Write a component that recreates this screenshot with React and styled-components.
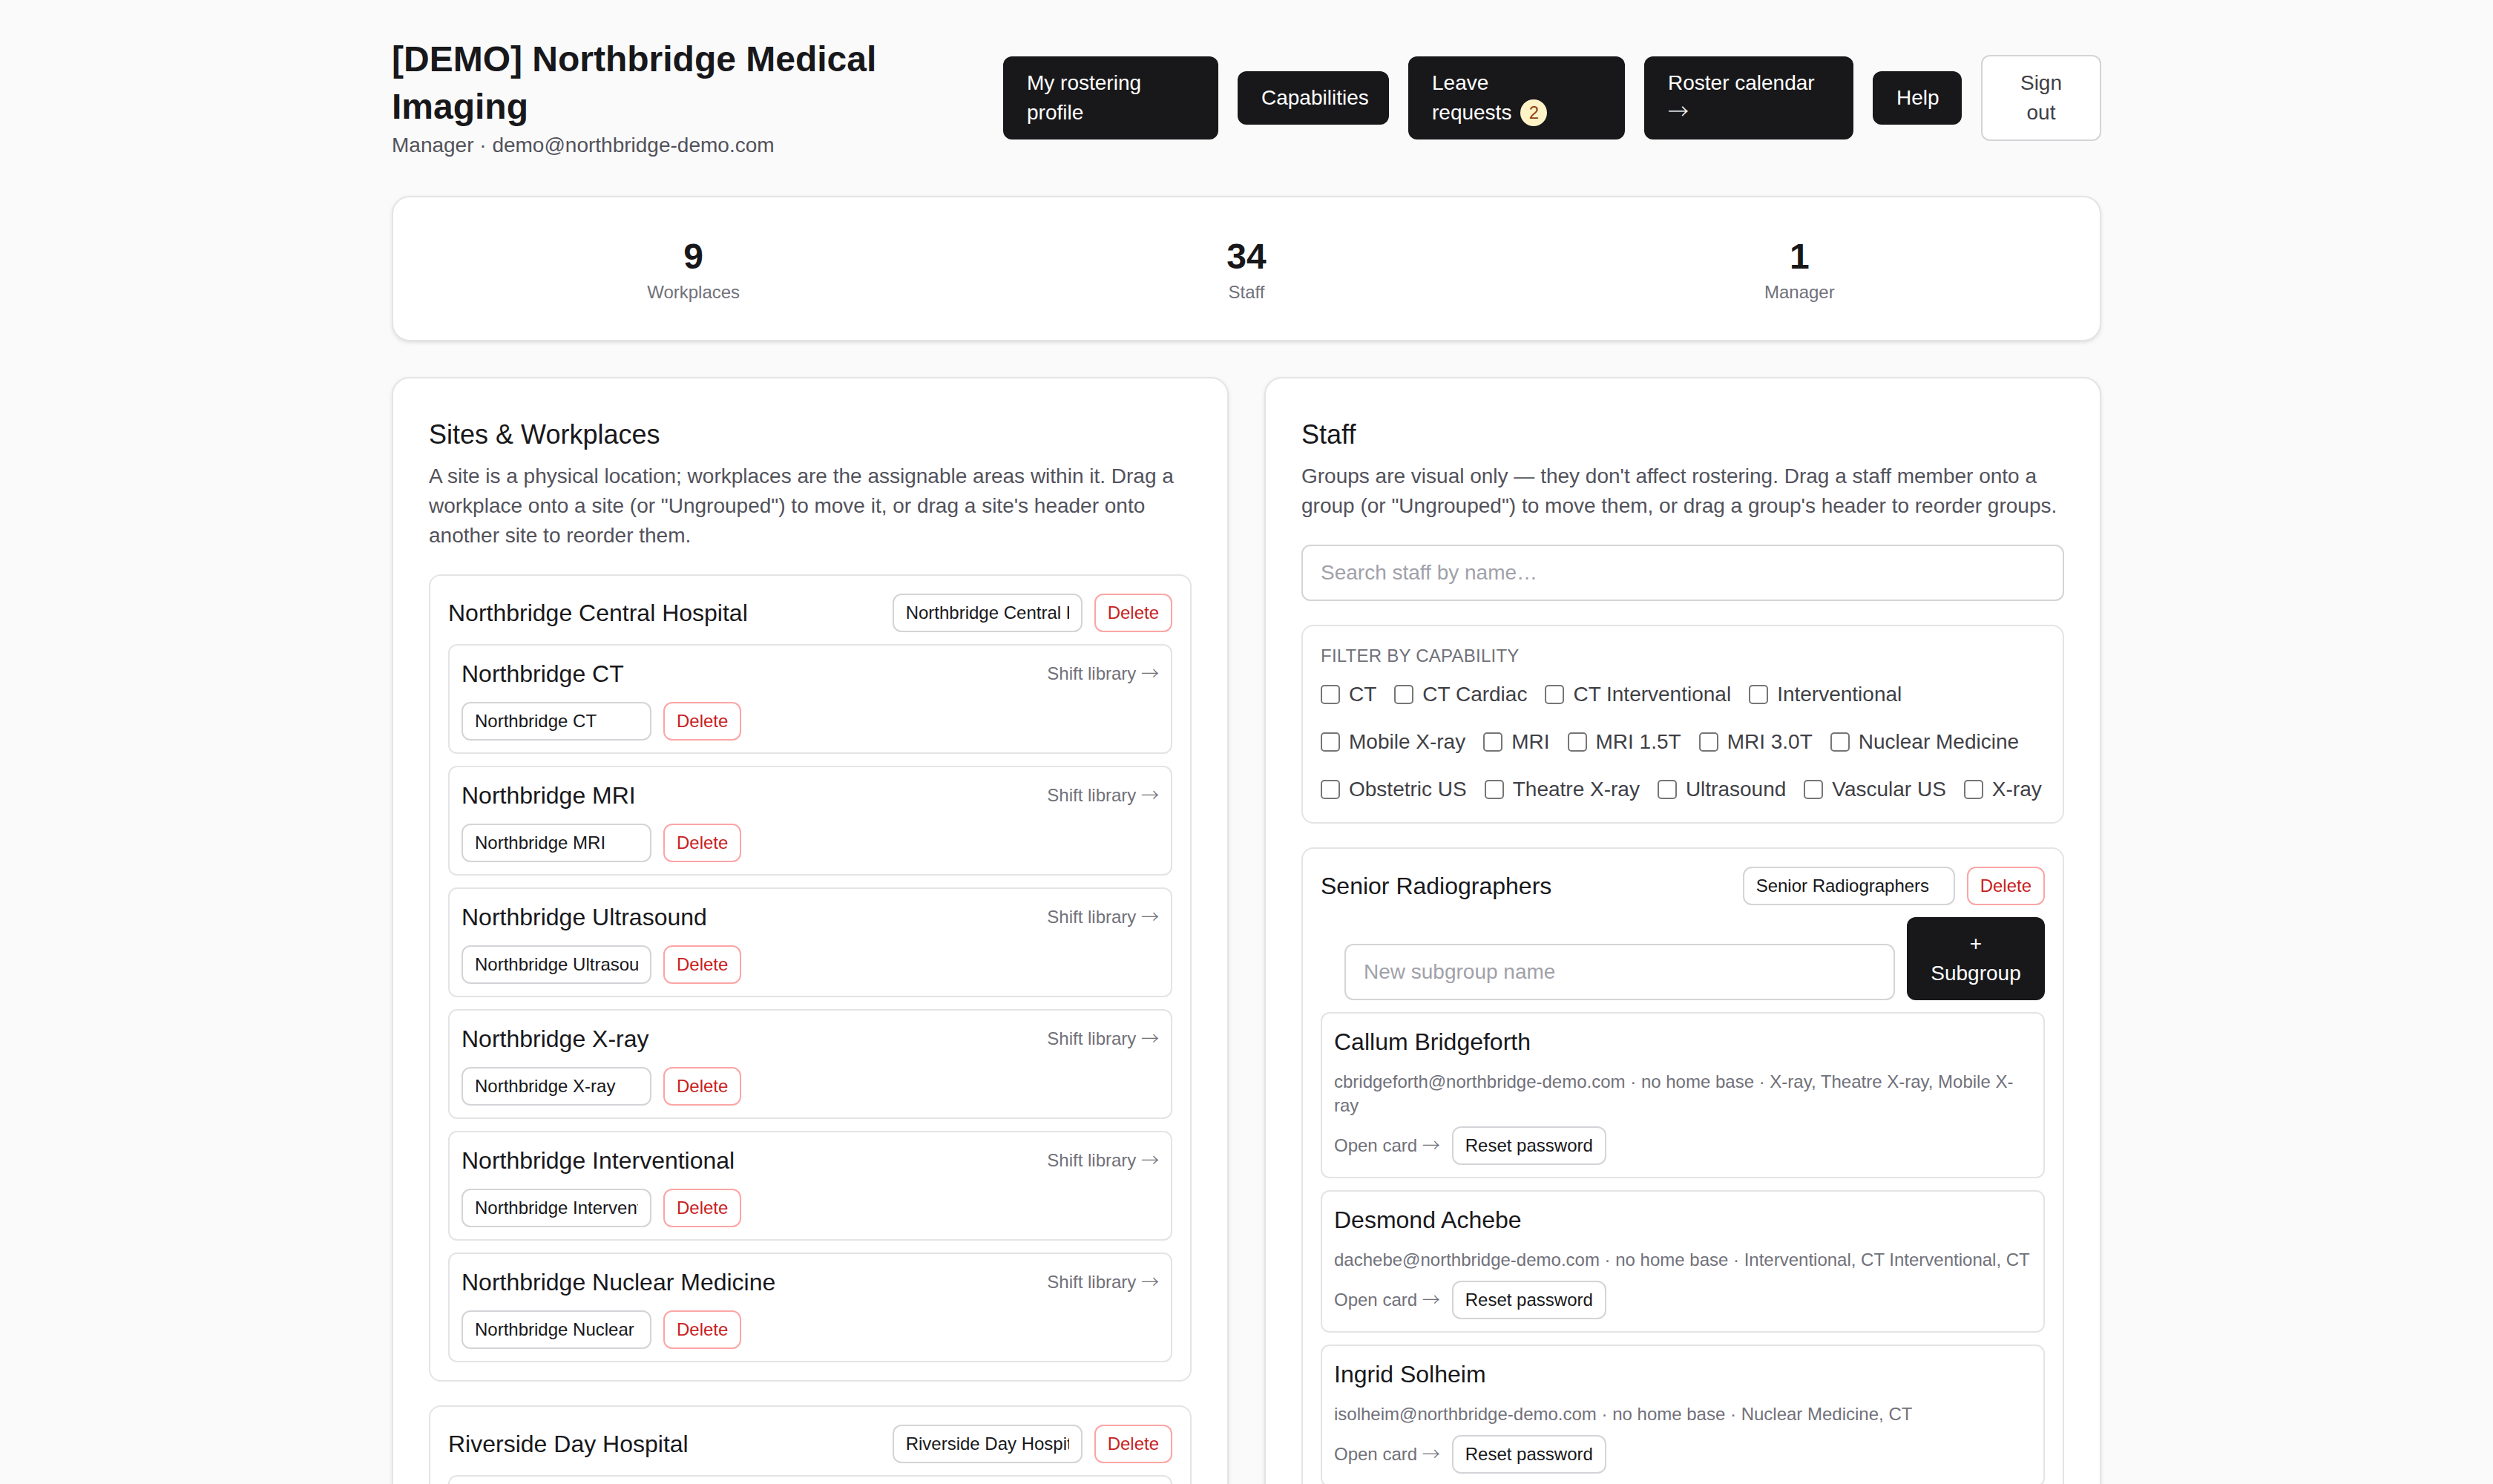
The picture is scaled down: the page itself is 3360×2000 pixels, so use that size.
import styled, { createGlobalStyle } from "styled-components";

const GlobalStyle = createGlobalStyle`
  * { box-sizing: border-box; }
  body {
    margin: 0;
    background: #fafafa;
    color: #18181b;
    font-family: "Liberation Sans", Arial, sans-serif;
  }
  button, input { font-family: inherit; }
`;

const sites = [
  {
    name: "Northbridge Central Hospital",
    workplaces: [
      "Northbridge CT",
      "Northbridge MRI",
      "Northbridge Ultrasound",
      "Northbridge X-ray",
      "Northbridge Interventional",
      "Northbridge Nuclear Medicine",
    ],
  },
  {
    name: "Riverside Day Hospital",
    workplaces: ["Riverside CT", "Riverside Ultrasound", "Riverside X-ray"],
  },
];

const capabilities = [
  "CT", "CT Cardiac", "CT Interventional", "Interventional",
  "Mobile X-ray", "MRI", "MRI 1.5T", "MRI 3.0T", "Nuclear Medicine",
  "Obstetric US", "Theatre X-ray", "Ultrasound", "Vascular US", "X-ray",
];

const seniors = [
  {
    name: "Callum Bridgeforth",
    email: "cbridgeforth@northbridge-demo.com",
    caps: "X-ray, Theatre X-ray, Mobile X-ray",
  },
  {
    name: "Desmond Achebe",
    email: "dachebe@northbridge-demo.com",
    caps: "Interventional, CT Interventional, CT",
  },
  {
    name: "Ingrid Solheim",
    email: "isolheim@northbridge-demo.com",
    caps: "Nuclear Medicine, CT",
  },
  {
    name: "Priya Raman",
    email: "praman@northbridge-demo.com",
    caps: "MRI, MRI 3.0T",
  },
];

const App = () => {
  return (
    <>
      <GlobalStyle />
      <Shell>
        <Page>
          <Header>
            <TitleBlock>
              <Title>[DEMO] Northbridge Medical Imaging</Title>
              <Sub>Manager · demo@northbridge-demo.com</Sub>
            </TitleBlock>
            <Nav>
              <NavButton $w={145}>My rostering profile</NavButton>
              <NavButton $w={102}>Capabilities</NavButton>
              <NavButton $w={146}>
                Leave <Keep>requests<Badge>2</Badge></Keep>
              </NavButton>
              <NavButton $w={141}>Roster calendar <Arrow>→</Arrow></NavButton>
              <NavButton $w={60}>Help</NavButton>
              <NavButton $w={81} $ghost>Sign out</NavButton>
            </Nav>
          </Header>

          <Stats>
            <Stat><StatValue>9</StatValue><StatLabel>Workplaces</StatLabel></Stat>
            <Stat><StatValue>34</StatValue><StatLabel>Staff</StatLabel></Stat>
            <Stat><StatValue>1</StatValue><StatLabel>Manager</StatLabel></Stat>
          </Stats>

          <Columns>
            <Panel>
              <PanelTitle>Sites &amp; Workplaces</PanelTitle>
              <Help>
                A site is a physical location; workplaces are the assignable areas
                within it. Drag a workplace onto a site (or "Ungrouped") to move it,
                or drag a site's header onto another site to reorder them.
              </Help>
              <Stack $gap={16} $top={16}>
                {sites.map((site) => (
                  <Box key={site.name}>
                    <BoxHeader>
                      <ItemName>{site.name}</ItemName>
                      <Controls>
                        <SmallInput $w={128} defaultValue={site.name} />
                        <DeleteButton>Delete</DeleteButton>
                      </Controls>
                    </BoxHeader>
                    <Stack $gap={8}>
                      {site.workplaces.map((wp) => (
                        <ItemCard key={wp}>
                          <ItemRow>
                            <ItemName>{wp}</ItemName>
                            <MutedLink>Shift library <Arrow>→</Arrow></MutedLink>
                          </ItemRow>
                          <Controls $top={8}>
                            <SmallInput $w={128} defaultValue={wp} />
                            <DeleteButton>Delete</DeleteButton>
                          </Controls>
                        </ItemCard>
                      ))}
                    </Stack>
                  </Box>
                ))}
              </Stack>
            </Panel>

            <Panel>
              <PanelTitle>Staff</PanelTitle>
              <Help>
                Groups are visual only — they don't affect rostering. Drag a staff
                member onto a group (or "Ungrouped") to move them, or drag a group's
                header to reorder groups.
              </Help>
              <Search placeholder="Search staff by name…" />

              <FilterBox>
                <FilterLabel>Filter by capability</FilterLabel>
                <CheckList>
                  {capabilities.map((c) => (
                    <CheckItem key={c}>
                      <Check type="checkbox" />
                      {c}
                    </CheckItem>
                  ))}
                </CheckList>
              </FilterBox>

              <Box $top={16}>
                <BoxHeader>
                  <ItemName>Senior Radiographers</ItemName>
                  <Controls>
                    <SmallInput $w={143} defaultValue="Senior Radiographers" />
                    <DeleteButton>Delete</DeleteButton>
                  </Controls>
                </BoxHeader>
                <SubgroupRow>
                  <SubInput placeholder="New subgroup name" />
                  <DarkButton $w={93}>+ Subgroup</DarkButton>
                </SubgroupRow>
                <Stack $gap={8}>
                  {seniors.map((s) => (
                    <ItemCard key={s.name}>
                      <ItemName>{s.name}</ItemName>
                      <Meta>
                        {s.email} · no home base · {s.caps}
                      </Meta>
                      <Controls $top={6}>
                        <MutedLink>Open card <Arrow>→</Arrow></MutedLink>
                        <OutlineButton>Reset password</OutlineButton>
                      </Controls>
                    </ItemCard>
                  ))}
                </Stack>
              </Box>
            </Panel>
          </Columns>
        </Page>
      </Shell>
    </>
  );
};

export default App;

// the whole layout is written in css px and drawn at 2x
const Shell = styled.div`
  zoom: 2;
`;

const Page = styled.div`
  max-width: 1152px;
  margin: 0 auto;
  padding: 24px 0;
`;

const Header = styled.header`
  display: flex;
  align-items: center;
  justify-content: space-between;
  gap: 16px;
  margin-bottom: 24px;
`;

const TitleBlock = styled.div`
  flex: 1 1 auto;
  min-width: 0;
`;

const Title = styled.h1`
  margin: 0;
  font-size: 24px;
  line-height: 32px;
  font-weight: 700;
  color: #18181b;
`;

const Sub = styled.p`
  margin: 0;
  font-size: 14px;
  line-height: 20px;
  color: #52525b;
`;

const Nav = styled.nav`
  display: flex;
  align-items: center;
  gap: 13px;
  flex-shrink: 0;
`;

const NavButton = styled.button`
  width: ${(p) => (p.$w ? `${p.$w}px` : "auto")};
  padding: 8px 16px;
  font-size: 14px;
  line-height: 20px;
  text-align: ${(p) => (p.$ghost ? "center" : "left")};
  border-radius: 6px;
  border: ${(p) => (p.$ghost ? "1px solid #d4d4d8" : "none")};
  background: ${(p) => (p.$ghost ? "#fff" : "#18181b")};
  color: ${(p) => (p.$ghost ? "#3f3f46" : "#fff")};
  cursor: pointer;
`;

const Keep = styled.span`
  white-space: nowrap;
`;

const Badge = styled.span`
  display: inline-flex;
  align-items: center;
  justify-content: center;
  width: 18px;
  height: 18px;
  margin: 1px 0 0 6px;
  border-radius: 9px;
  background: #fef3c7;
  color: #92400e;
  font-size: 12px;
  line-height: 1;
  vertical-align: top;
`;

// the arrow glyph comes from a font that draws it long and thin
const Arrow = styled.span`
  font-family: "Noto Sans CJK JP", "DejaVu Sans", sans-serif;
  font-weight: 300;
  line-height: 1;
`;

const Card = styled.section`
  background: #fff;
  border: 1px solid #e4e4e7;
  border-radius: 12px;
  box-shadow: 0 1px 3px rgba(0, 0, 0, 0.08), 0 1px 2px -1px rgba(0, 0, 0, 0.08);
  padding: 24px;
`;

const Stats = styled(Card)`
  display: grid;
  grid-template-columns: repeat(3, 1fr);
  gap: 16px;
  margin-bottom: 24px;
`;

const Stat = styled.div`
  text-align: center;
`;

const StatValue = styled.div`
  font-size: 24px;
  line-height: 32px;
  font-weight: 700;
`;

const StatLabel = styled.div`
  font-size: 12px;
  line-height: 16px;
  color: #71717a;
`;

const Columns = styled.div`
  display: grid;
  grid-template-columns: 1fr 1fr;
  gap: 24px;
  align-items: start;
`;

const Panel = styled(Card)`
  min-width: 0;
`;

const PanelTitle = styled.h2`
  margin: 0;
  font-size: 18px;
  line-height: 28px;
  font-weight: 400;
`;

const Help = styled.p`
  margin: 4px 0 0;
  font-size: 14px;
  line-height: 20px;
  color: #52525b;
`;

const Stack = styled.div`
  display: flex;
  flex-direction: column;
  gap: ${(p) => p.$gap}px;
  margin-top: ${(p) => p.$top || 0}px;
`;

const Box = styled.div`
  margin-top: ${(p) => p.$top || 0}px;
  background: #fff;
  border: 1px solid #e4e4e7;
  border-radius: 8px;
  padding: 12px;
`;

const BoxHeader = styled.div`
  display: flex;
  align-items: center;
  justify-content: space-between;
  gap: 8px;
  margin-bottom: 8px;
`;

const ItemName = styled.div`
  font-size: 16px;
  line-height: 22px;
  color: #18181b;
`;

const Controls = styled.div`
  display: flex;
  align-items: center;
  gap: 8px;
  margin-top: ${(p) => p.$top || 0}px;
`;

const SmallInput = styled.input`
  width: ${(p) => p.$w}px;
  height: 26px;
  padding: 4px 8px;
  font-size: 12px;
  line-height: 16px;
  color: #18181b;
  background: #fff;
  border: 1px solid #d4d4d8;
  border-radius: 6px;
  outline: none;
`;

const DeleteButton = styled.button`
  height: 26px;
  padding: 4px 8px;
  font-size: 12px;
  line-height: 16px;
  color: #c81e1e;
  background: #fff;
  border: 1px solid #fca5a5;
  border-radius: 6px;
`;

const OutlineButton = styled(DeleteButton)`
  color: #18181b;
  border-color: #d4d4d8;
`;

const ItemCard = styled.div`
  background: #fff;
  border: 1px solid #e4e4e7;
  border-radius: 6px;
  padding: 8px;
`;

const ItemRow = styled.div`
  display: flex;
  align-items: center;
  justify-content: space-between;
`;

const MutedLink = styled.span`
  font-size: 12px;
  line-height: 16px;
  color: #71717a;
`;

const Search = styled.input`
  display: block;
  width: 100%;
  margin-top: 16px;
  padding: 8px 12px;
  font-size: 14px;
  line-height: 20px;
  border: 1px solid #d4d4d8;
  border-radius: 6px;
  background: #fff;
  outline: none;
  &::placeholder { color: #a1a1aa; }
`;

const FilterBox = styled.div`
  margin-top: 16px;
  border: 1px solid #e4e4e7;
  border-radius: 8px;
  padding: 12px;
`;

const FilterLabel = styled.div`
  font-size: 12px;
  line-height: 16px;
  letter-spacing: 0.01em;
  text-transform: uppercase;
  color: #71717a;
`;

const CheckList = styled.div`
  display: flex;
  flex-wrap: wrap;
  column-gap: 12px;
  row-gap: 12px;
  margin-top: 8px;
`;

const CheckItem = styled.label`
  display: inline-flex;
  align-items: center;
  gap: 6px;
  font-size: 14px;
  line-height: 20px;
  color: #3f3f46;
`;

const Check = styled.input`
  margin: 0;
  width: 13px;
  height: 13px;
`;

const SubgroupRow = styled.div`
  display: flex;
  align-items: flex-end;
  gap: 8px;
  margin: 0 0 8px 16px;
`;

const SubInput = styled.input`
  flex: 1 1 auto;
  min-width: 0;
  padding: 8px 12px;
  font-size: 14px;
  line-height: 20px;
  border: 1px solid #d4d4d8;
  border-radius: 6px;
  background: #fff;
  outline: none;
  &::placeholder { color: #a1a1aa; }
`;

const DarkButton = styled.button`
  flex-shrink: 0;
  width: ${(p) => p.$w}px;
  padding: 8px 16px;
  font-size: 14px;
  line-height: 20px;
  text-align: center;
  color: #fff;
  background: #18181b;
  border: none;
  border-radius: 6px;
`;

const Meta = styled.div`
  margin-top: 8px;
  font-size: 12px;
  line-height: 16px;
  color: #71717a;
`;
